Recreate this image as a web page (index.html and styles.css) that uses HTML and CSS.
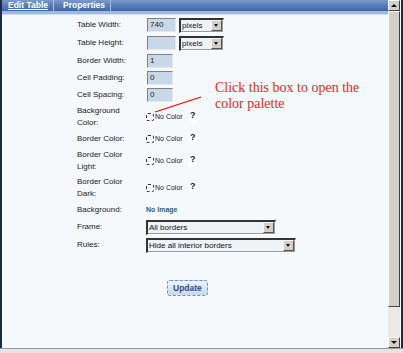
FILE: index.html
```html
<!DOCTYPE html>
<html>

<head>
    <meta charset="UTF-8">
    <link rel="stylesheet" href="styles.css">
</head>

<body>
    <div class="window">
        <div class="page">
            <div class="tabs">
                <span class="tab active">Edit Table</span>
                <span class="tab">Properties</span>
            </div>
            <div class="tab-strip"></div>

            <div class="form">
                <label class="label">Table Width:</label>
                <div class="value">
                    <span class="input wide">740</span>
                    <span class="select small"><span class="select-text">pixels</span><span class="select-btn"></span></span>
                </div>

                <label class="label">Table Height:</label>
                <div class="value">
                    <span class="input wide"></span>
                    <span class="select small"><span class="select-text">pixels</span><span class="select-btn"></span></span>
                </div>

                <label class="label">Border Width:</label>
                <div class="value"><span class="input">1</span></div>

                <label class="label">Cell Padding:</label>
                <div class="value"><span class="input">0</span></div>

                <label class="label">Cell Spacing:</label>
                <div class="value"><span class="input">0</span></div>

                <label class="label">Background<br>Color:</label>
                <div class="value">
                    <span class="swatch"></span><span class="no-color">No Color</span><span class="help">?</span>
                </div>

                <label class="label">Border Color:</label>
                <div class="value">
                    <span class="swatch"></span><span class="no-color">No Color</span><span class="help">?</span>
                </div>

                <label class="label">Border Color<br>Light:</label>
                <div class="value">
                    <span class="swatch"></span><span class="no-color">No Color</span><span class="help">?</span>
                </div>

                <label class="label">Border Color<br>Dark:</label>
                <div class="value">
                    <span class="swatch"></span><span class="no-color">No Color</span><span class="help">?</span>
                </div>

                <label class="label">Background:</label>
                <div class="value"><span class="no-image">No Image</span></div>

                <label class="label">Frame:</label>
                <div class="value">
                    <span class="select frame"><span class="select-text">All borders</span><span class="select-btn"></span></span>
                </div>

                <label class="label">Rules:</label>
                <div class="value">
                    <span class="select rules"><span class="select-text">Hide all interior borders</span><span class="select-btn"></span></span>
                </div>

                <div class="actions">
                    <button class="update">Update</button>
                </div>

                <!-- annotation over the form -->
                <svg class="pointer" width="52" height="22" viewBox="0 0 52 22">
                    <line x1="3" y1="19" x2="49" y2="4" stroke="#ff0000" stroke-width="1.2" />
                </svg>
                <div class="note">Click this box to open the<br>color palette</div>
            </div>
        </div>

        <div class="scrollbar">
            <div class="sb-btn"><span class="arrow-up"></span></div>
            <div class="sb-thumb"></div>
            <div class="sb-track"></div>
            <div class="sb-btn"><span class="arrow-down"></span></div>
        </div>
    </div>
    <div class="statusbar"></div>
</body>
</html>
```

FILE: styles.css
```css
:root {
    --content-bg: #f5f9fc;
    --input-bg: #c9d8e8;
    --select-bg: #eef3f8;
    --face: #d4d0c8;
    --frame-dark: #1d2b4a;
}

body {
    margin: 0;
    font-family: 'Liberation Sans', Arial, sans-serif;
    font-size: 8px;
    color: #1a1a1a;
    background: var(--content-bg);
    overflow: hidden;
}

.window {
    display: flex;
    height: 348px;
    border-left: 2px solid var(--frame-dark);
}

.page {
    flex: 1;
    display: flex;
    flex-direction: column;
    background: var(--content-bg);
}

.tabs {
    display: flex;
    height: 11px;
    background: linear-gradient(180deg, #7b9acb 0%, #5a7fb9 45%, #3f68a8 100%);
    padding-left: 4px;
}

.tab {
    color: #fff;
    font-weight: bold;
    font-size: 8.5px;
    line-height: 11px;
    padding: 0 5px 0 2px;
    border-right: 1px solid #a9c0e0;
    margin-right: 7px;
}

.tab.active {
    text-decoration: underline;
}

.tab-strip {
    height: 3px;
    background: #9fb8dc;
    border-bottom: 1px solid #d3dff0;
}

.form {
    position: relative;
    display: grid;
    grid-template-columns: 69px auto;
    grid-auto-rows: minmax(14px, auto);
    row-gap: 3px;
    align-items: center;
    padding: 2.5px 0 0 75px;
}

.label {
    line-height: 12px;
}

.value {
    display: flex;
    align-items: center;
    gap: 3px;
}

.input {
    box-sizing: border-box;
    width: 26px;
    height: 14px;
    margin-left: 1px;
    padding-left: 2px;
    line-height: 12px;
    background: var(--input-bg);
    border: 1px solid #e2e8ee;
    border-top-color: #808080;
    border-left-color: #808080;
}

.input.wide {
    width: 29px;
}

.select {
    box-sizing: border-box;
    display: flex;
    align-items: center;
    height: 15px;
    background: var(--select-bg);
    border: 1px solid #fff;
    border-top: 2px solid #333;
    border-left: 2px solid #333;
    box-shadow: inset -1px -1px 0 #9a9a9a;
}

.select.small {
    width: 45px;
}

.select.frame {
    width: 130px;
}

.select.rules {
    width: 150px;
}

.select-text {
    flex: 1;
    padding-left: 1px;
    font-size: 8px;
    color: #111;
    white-space: nowrap;
    overflow: hidden;
}

.select-btn {
    position: relative;
    box-sizing: border-box;
    width: 11px;
    height: 11px;
    margin-right: 1px;
    background: var(--face);
    border: 1px solid #f4f4f4;
    border-right-color: #555;
    border-bottom-color: #555;
}

.select-btn::after {
    content: "";
    position: absolute;
    left: 2px;
    top: 3px;
    border-left: 2.5px solid transparent;
    border-right: 2.5px solid transparent;
    border-top: 3px solid #111;
}

.swatch {
    box-sizing: border-box;
    width: 8px;
    height: 8px;
    border: 1px dashed #333;
    border-radius: 2px;
}

.no-color {
    font-size: 7px;
    margin-left: -2px;
}

.help {
    width: 8px;
    height: 11px;
    margin-left: 3px;
    background: #fff;
    font-weight: bold;
    font-size: 9px;
    line-height: 9px;
    text-align: center;
}

.no-image {
    font-size: 7px;
    font-weight: bold;
    color: #2d5c9c;
}

.actions {
    grid-column: 2;
    margin: 24px 0 0 21px;
}

.update {
    height: 16px;
    padding: 0 5px;
    font-family: 'Liberation Sans', Arial, sans-serif;
    font-size: 8.5px;
    font-weight: bold;
    color: #2b4f8a;
    background: linear-gradient(180deg, #eef4fb 0%, #c8d8ee 100%);
    border: 1px dashed #6d8fc2;
    border-radius: 3px;
}

.pointer {
    position: absolute;
    left: 150px;
    top: 78px;
}

.note {
    position: absolute;
    left: 213px;
    top: 65px;
    font-family: 'Liberation Serif', 'Times New Roman', serif;
    font-size: 14px;
    line-height: 16px;
    color: #ff1a1a;
    white-space: nowrap;
}

.scrollbar {
    display: flex;
    flex-direction: column;
    width: 12px;
    border-right: 2px solid var(--frame-dark);
    padding-right: 1px;
    background: #fff;
}

.sb-btn {
    position: relative;
    box-sizing: border-box;
    height: 11px;
    background: var(--face);
    border: 1px solid #fff;
    border-right-color: #404040;
    border-bottom-color: #404040;
}

.sb-thumb {
    box-sizing: border-box;
    height: 296px;
    background: var(--face);
    border: 1px solid #fff;
    border-right-color: #404040;
    border-bottom-color: #404040;
}

.sb-track {
    flex: 1;
    background: #ebe9e4;
}

.arrow-up,
.arrow-down {
    position: absolute;
    left: 2px;
    top: 3px;
    border-left: 3px solid transparent;
    border-right: 3px solid transparent;
}

.arrow-up {
    border-bottom: 3px solid #111;
}

.arrow-down {
    border-top: 3px solid #111;
}

.statusbar {
    height: 4px;
    background: #e4e4e4;
    border-top: 1px solid #9a9a9a;
}
```
